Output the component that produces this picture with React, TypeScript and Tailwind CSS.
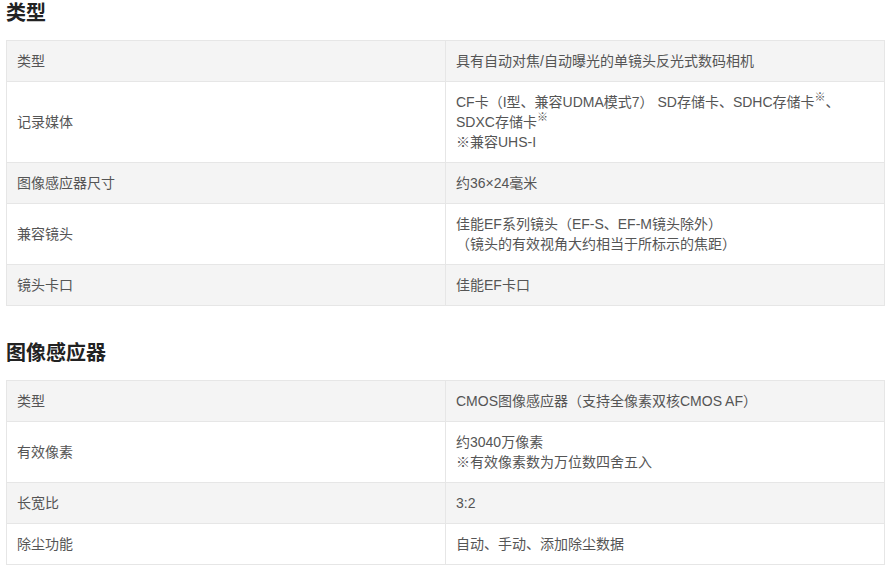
import React from 'react';

type Row = { label: string; value: React.ReactNode };

const Sup = () => <span className="relative -top-[6px] text-[11px] leading-none">※</span>;

const basic: Row[] = [
  { label: '类型', value: '具有自动对焦/自动曝光的单镜头反光式数码相机' },
  {
    label: '记录媒体',
    value: (
      <>
        CF卡（I型、兼容UDMA模式7） SD存储卡、SDHC存储卡<Sup />、<br />
        SDXC存储卡<Sup />
        <br />※兼容UHS-I
      </>
    ),
  },
  { label: '图像感应器尺寸', value: '约36×24毫米' },
  {
    label: '兼容镜头',
    value: (
      <>
        佳能EF系列镜头（EF-S、EF-M镜头除外）
        <br />（镜头的有效视角大约相当于所标示的焦距）
      </>
    ),
  },
  { label: '镜头卡口', value: '佳能EF卡口' },
];

const sensor: Row[] = [
  { label: '类型', value: 'CMOS图像感应器（支持全像素双核CMOS AF）' },
  {
    label: '有效像素',
    value: (
      <>
        约3040万像素
        <br />※有效像素数为万位数四舍五入
      </>
    ),
  },
  { label: '长宽比', value: '3:2' },
  { label: '除尘功能', value: '自动、手动、添加除尘数据' },
];

const SpecTable = ({ rows }: { rows: Row[] }) => (
  <table className="w-[879px] border-collapse table-fixed text-[14px] leading-5 text-[#555]">
    <tbody>
      {rows.map((r, i) => (
        <tr key={i} className={i % 2 === 0 ? 'bg-[#f4f4f4]' : 'bg-white'}>
          <td className="w-1/2 border border-[#e6e6e6] px-[10px] py-[10px] align-middle">{r.label}</td>
          <td className="w-1/2 border border-[#e6e6e6] px-[10px] py-[10px] align-middle">{r.value}</td>
        </tr>
      ))}
    </tbody>
  </table>
);

export default function App() {
  return (
    <div className="w-[894px] h-[572px] bg-white px-[6px] overflow-hidden font-['Liberation_Sans','Noto_Sans_CJK_SC',sans-serif]">
      <h2 className="text-[20px] leading-[26px] font-bold text-[#222] mb-[14px]">类型</h2>
      <SpecTable rows={basic} />
      <h2 className="text-[20px] leading-[26px] font-bold text-[#222] mt-[34px] mb-[14px]">图像感应器</h2>
      <SpecTable rows={sensor} />
    </div>
  );
}
